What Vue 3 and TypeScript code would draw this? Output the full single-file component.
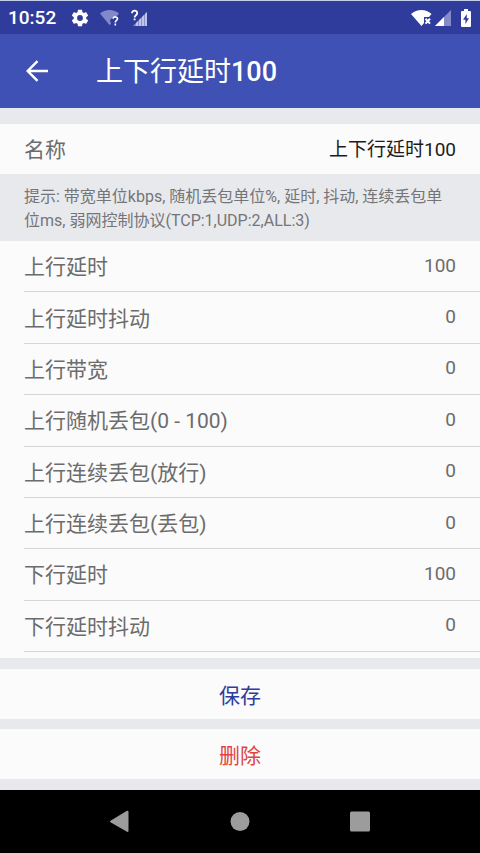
<script setup lang="ts">
import { reactive, ref } from 'vue'

interface Field {
  id: string
  label: string
  value: string
}

const name = ref('上下行延时100')

const fields = reactive<Field[]>([
  { id: 'up-delay', label: '上行延时', value: '100' },
  { id: 'up-jitter', label: '上行延时抖动', value: '0' },
  { id: 'up-bandwidth', label: '上行带宽', value: '0' },
  { id: 'up-random-loss', label: '上行随机丢包(0 - 100)', value: '0' },
  { id: 'up-burst-pass', label: '上行连续丢包(放行)', value: '0' },
  { id: 'up-burst-drop', label: '上行连续丢包(丢包)', value: '0' },
  { id: 'down-delay', label: '下行延时', value: '100' },
  { id: 'down-jitter', label: '下行延时抖动', value: '0' },
])
</script>

<template>
  <div class="screen">
    <div class="status">
      <span class="clock">10:52</span>
      <svg class="gear" viewBox="0 0 24 24" width="20" height="20">
        <path fill="#fff" d="M19.43 12.98c.04-.32.07-.64.07-.98s-.03-.66-.07-.98l2.11-1.65c.19-.15.24-.42.12-.64l-2-3.46c-.12-.22-.39-.3-.61-.22l-2.49 1c-.52-.4-1.08-.73-1.69-.98l-.38-2.65C14.46 2.18 14.25 2 14 2h-4c-.25 0-.46.18-.49.42l-.38 2.65c-.61.25-1.17.59-1.69.98l-2.49-1c-.23-.09-.49 0-.61.22l-2 3.46c-.13.22-.07.49.12.64l2.11 1.65c-.04.32-.07.65-.07.98s.03.66.07.98l-2.11 1.65c-.19.15-.24.42-.12.64l2 3.46c.12.22.39.3.61.22l2.49-1c.52.4 1.08.73 1.69.98l.38 2.65c.03.24.24.42.49.42h4c.25 0 .46-.18.49-.42l.38-2.65c.61-.25 1.17-.59 1.69-.98l2.49 1c.23.09.49 0 .61-.22l2-3.46c.12-.22.07-.49-.12-.64l-2.11-1.65zM12 15.5a3.5 3.5 0 1 1 0-7 3.5 3.5 0 0 1 0 7z" />
      </svg>
      <svg class="wifi-q" viewBox="0 0 20 18" width="20" height="18">
        <path fill="#8288c8" d="M0 4.500C5-.2 14-.2 19 4.500L16 8h-3l-3 3 1 4-1.500 1z" />
        <path fill="none" stroke="#fff" stroke-width="1.600" d="M13 9.800c0-2.600 4.500-2.400 4.500 0 0 1.700-2.200 1.700-2.200 3.700M15.300 14.600v1.800" />
      </svg>
      <svg class="cell-q" viewBox="0 0 17 18" width="17" height="18">
        <path fill="#8d93cf" d="M2 17L16 3v14z" />
        <path fill="#c0c4e8" d="M5 14l2-2v5H5zM8 11l2-2v8H8zM11 8l2-2v11h-2zM14 5l2-2v14h-2z" />
        <path fill="none" stroke="#303c9c" stroke-width="4" d="M1 4.200c0-3.600 5.200-3.200 5.200 0 0 2-2.600 2-2.600 4.200v2.800" />
        <path fill="none" stroke="#fff" stroke-width="1.800" d="M1 4.200c0-3.600 5.200-3.200 5.200 0 0 2-2.600 2-2.600 4.200M3.600 9.400v1.800" />
      </svg>
      <span class="spacer"></span>
      <svg class="wifi-x" viewBox="0 0 22 18" width="22" height="18">
        <path fill="#fff" d="M0 5C6-.4 15-.4 20.500 5L18 8h-5v6l-2.500 3z" />
        <path stroke="#fff" stroke-width="2" d="M14.500 9.800l4.500 4.800M19 9.800l-4.500 4.800" />
      </svg>
      <svg class="cell" viewBox="0 0 16 16" width="16" height="16">
        <path fill="#858bc9" d="M0 16L16 0v16z" />
        <path fill="#fff" d="M0 16l9-9v9z" />
      </svg>
      <svg class="battery" viewBox="0 0 10 18" width="10" height="18">
        <path fill="#fff" d="M3 0h4v2h2q1 0 1 1v14q0 1-1 1H1q-1 0-1-1V3q0-1 1-1h2z" />
        <path fill="#303c9c" d="M5.800 5L2 10.800h2.400V15L8 9.300H5.800z" />
      </svg>
    </div>

    <header class="bar">
      <button class="back" type="button" aria-label="返回">
        <svg viewBox="0 0 22 22" width="22" height="22">
          <path fill="none" stroke="#fff" stroke-width="2.400" d="M22 11H2M11.500 1.200L1.700 11l9.800 9.800" />
        </svg>
      </button>
      <h1>上下行延时<span class="digits">100</span></h1>
    </header>

    <form class="form" @submit.prevent>
      <div class="row name-row">
        <label for="name">名称</label>
        <input id="name" v-model="name" class="strong" type="text">
      </div>
      <p class="hint">提示: 带宽单位kbps, 随机丢包单位%, 延时, 抖动, 连续丢包单位ms, 弱网控制协议(TCP:1,UDP:2,ALL:3)</p>
      <div class="list">
        <div v-for="field in fields" :key="field.id" class="row item">
          <label :for="field.id">{{ field.label }}</label>
          <input :id="field.id" v-model="field.value" type="text" inputmode="numeric">
        </div>
      </div>
      <div class="actions">
        <button class="action save" type="submit">保存</button>
        <button class="action remove" type="button">删除</button>
      </div>
    </form>

    <nav class="nav">
      <button type="button" aria-label="后退">
        <svg viewBox="0 0 22 22" width="22" height="22">
          <path fill="#9c9c9c" stroke="#9c9c9c" stroke-width="2" stroke-linejoin="round" d="M2 11.500L18.500 1.700v19.300z" />
        </svg>
      </button>
      <button type="button" aria-label="主屏幕">
        <svg viewBox="0 0 22 22" width="22" height="22">
          <circle cx="11" cy="11.500" r="9.500" fill="#9c9c9c" />
        </svg>
      </button>
      <button type="button" aria-label="最近任务">
        <svg viewBox="0 0 22 22" width="22" height="22">
          <rect x="1" y="1.500" width="20" height="20" rx="1.500" fill="#9c9c9c" />
        </svg>
      </button>
    </nav>
  </div>
</template>

<style>
body {
  margin: 0;
}
</style>

<style scoped>
.screen {
  display: flex;
  flex-direction: column;
  min-height: 100vh;
  background: #e8e9ec;
  color: #6c6c6c;
  font-family: Roboto, "Noto Sans CJK SC", sans-serif;
}

svg {
  display: block;
}

button,
input {
  padding: 0;
  border: 0;
  background: none;
  font-family: inherit;
}

.status {
  box-sizing: border-box;
  display: flex;
  align-items: center;
  height: 34px;
  padding: 0 9px 0 8px;
  border-top: 1px solid #c3cdec;
  background: #303c9c;
}

.clock {
  color: #fff;
  font-size: 19px;
  font-weight: 500;
  line-height: 32px;
}

.gear {
  margin-left: 14px;
}

.wifi-q {
  margin-left: 10px;
}

.cell-q {
  margin-left: 11px;
}

.spacer {
  flex: 1;
}

.cell {
  margin-left: 2px;
}

.battery {
  margin-left: 10px;
}

.bar {
  display: flex;
  align-items: center;
  height: 74px;
  padding: 0 24px;
  background: #3f51b4;
}

.back {
  padding: 2px;
  margin-right: 46px;
}

h1 {
  margin: 0;
  padding-top: 2px;
  color: #fff;
  font-size: 27px;
  font-weight: 400;
  line-height: 40px;
}

.digits {
  font-weight: 500;
}

.form {
  display: flex;
  flex: 1;
  flex-direction: column;
  padding-top: 16px;
}

.row {
  display: flex;
  align-items: center;
  padding-right: 24px;
}

.row label {
  flex: none;
  padding-top: 2px;
  font-size: 21px;
  line-height: 30px;
}

.row input {
  flex: 1;
  min-width: 0;
  height: 28px;
  margin-bottom: 2px;
  color: #6c6c6c;
  font-size: 19px;
  text-align: right;
  outline: none;
}

.row .strong {
  margin-bottom: 4px;
  color: #1c1c1c;
}

.name-row {
  height: 50px;
  padding-left: 24px;
  background: #fbfbfb;
}

.hint {
  margin: 0;
  padding: 11px 24px 8px;
  color: #747578;
  font-size: 16px;
  line-height: 24px;
}

.list {
  display: flex;
  flex: 1;
  flex-direction: column;
  padding: 0 0 6px 24px;
  background: #fbfbfb;
}

.item {
  flex: 1;
  border-bottom: 1px solid #d6d6d6;
}

.actions {
  display: grid;
  gap: 10px;
  padding: 11px 0;
}

.action {
  height: 50px;
  background: #fbfbfb;
  font-size: 21px;
}

.save {
  color: #303c9c;
}

.remove {
  color: #e04340;
}

.nav {
  display: flex;
  justify-content: center;
  gap: 98px;
  padding: 20px 0 21px;
  background: #000;
}
</style>
